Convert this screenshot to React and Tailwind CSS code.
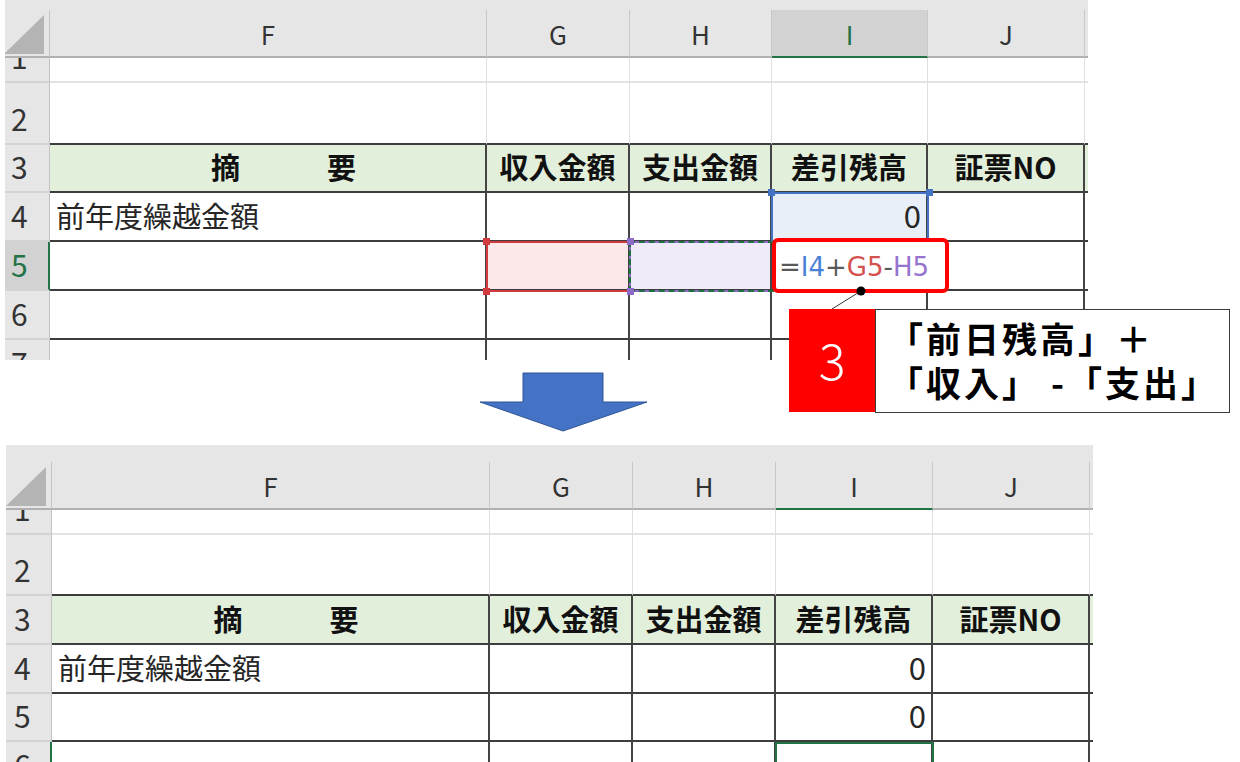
import React from "react";

const jp = "font-['Noto_Sans_CJK_JP','Noto_Sans',sans-serif]";

// column widths per sheet (the lower screenshot is scaled up a hair)
const topCols = [
  { label: "F", w: "w-[437px]" },
  { label: "G", w: "w-[143px]" },
  { label: "H", w: "w-[142px]" },
  { label: "I", w: "w-[156px]" },
  { label: "J", w: "w-[157px]" },
];
const bottomCols = [
  { label: "F", w: "w-[438px]" },
  { label: "G", w: "w-[143px]" },
  { label: "H", w: "w-[143px]" },
  { label: "I", w: "w-[157px]" },
  { label: "J", w: "w-[157px]" },
];

const headTexts = {
  0: { v: "摘　　　要", cls: "justify-center pl-[32px] font-bold text-[29px] text-[#111]" },
  1: { v: "収入金額", cls: "justify-center font-bold text-[29px] text-[#111]" },
  2: { v: "支出金額", cls: "justify-center font-bold text-[29px] text-[#111]" },
  3: { v: "差引残高", cls: "justify-center font-bold text-[29px] text-[#111]" },
  4: { v: "証票NO", cls: "justify-center font-bold text-[29px] text-[#111]" },
};
const carry = { v: "前年度繰越金額", cls: "justify-start pl-[6px] text-[29px] text-[#262626]" };
const zero = { v: "0", cls: "justify-end pr-[5px] text-[31px] text-[#262626]" };

const topRows = [
  { n: 1, h: "h-[25px]", type: "plain" },
  { n: 2, h: "h-[62px]", type: "plain", darkBottom: true },
  { n: 3, h: "h-[48px]", type: "head", cells: headTexts },
  { n: 4, h: "h-[49px]", type: "body", cells: { 0: carry, 3: { ...zero, bg: "bg-[#e9eff9]" } } },
  { n: 5, h: "h-[49px]", type: "body", active: true, cells: { 1: { bg: "bg-[#fbe9ea]" }, 2: { bg: "bg-[#efebf8]" } } },
  { n: 6, h: "h-[49px]", type: "body" },
  { n: 7, h: "h-[49px]", type: "body" },
];

const bottomRows = [
  { n: 1, h: "h-[25px]", type: "plain" },
  { n: 2, h: "h-[61px]", type: "plain", darkBottom: true },
  { n: 3, h: "h-[49px]", type: "head", cells: headTexts },
  { n: 4, h: "h-[49px]", type: "body", cells: { 0: carry, 3: zero } },
  { n: 5, h: "h-[48px]", type: "body", cells: { 3: zero } },
  { n: 6, h: "h-[49px]", type: "body", lineOnly: true },
];

function Corner() {
  return (
    <svg className="absolute right-[5px] bottom-[2px]" width="40" height="39" viewBox="0 0 40 39">
      <polygon points="0,39 40,39 40,0" fill="#b4b4b4" />
    </svg>
  );
}

function Sheet({ ml, height, band, hdrW, numPl, cols, rows, activeCol, activeColFill }) {
  return (
    <div className={`${ml} ${height} w-fit overflow-hidden ${jp}`}>
      {/* column headers */}
      <div className="bg-[#e6e6e6]">
        <div className={band} />
        <div className="flex h-[48px]">
          <div className={`${hdrW} relative border-r border-r-[#c4c4c4] border-b-2 border-b-[#b0b0b0]`}>
            <Corner />
          </div>
          {cols.map((c, i) => (
            <div
              key={c.label}
              className={`${c.w} flex items-center justify-center text-[26px] border-r border-r-[#c8c8c8] border-b-2 ${
                i === activeCol
                  ? `border-b-[#217346] ${activeColFill ? "bg-[#d2d2d2] text-[#217346]" : "text-[#333]"}`
                  : "border-b-[#b0b0b0] text-[#333]"
              }`}
            >
              {c.label}
            </div>
          ))}
          <div className="w-[3px] border-b-2 border-b-[#b0b0b0]" />
        </div>
      </div>

      {/* rows */}
      {rows.map((r) => {
        const plain = r.type === "plain";
        const bottom = plain
          ? r.darkBottom
            ? "border-b-2 border-b-[#3d3d3d]"
            : "border-b-2 border-b-[#e2e2e2]"
          : "border-b-2 border-b-[#3d3d3d]";
        const right = plain ? "border-r border-r-[#e0e0e0]" : "border-r-2 border-r-[#444]";
        return (
          <div key={r.n} className={`flex ${r.h}`}>
            <div
              className={`${hdrW} ${numPl} flex items-end overflow-hidden border-b-2 border-b-[#d3d3d3] ${
                r.active
                  ? "bg-[#d2d2d2] text-[#217346] border-r-2 border-r-[#217346]"
                  : r.lineOnly
                  ? "bg-[#e6e6e6] text-[#333] border-r-2 border-r-[#217346]"
                  : "bg-[#e6e6e6] text-[#333] border-r border-r-[#c2c2c2]"
              }`}
            >
              <span className="text-[30px] leading-[30px] mb-[10px]">{r.n}</span>
            </div>
            {cols.map((c, i) => {
              const cell = r.cells && r.cells[i];
              const bg = cell && cell.bg ? cell.bg : r.type === "head" ? "bg-[#e2efda]" : "bg-white";
              return (
                <div key={c.label} className={`${c.w} flex items-end overflow-hidden ${bg} ${right} ${bottom} ${cell && cell.cls ? cell.cls : ""}`}>
                  {cell && cell.v && <span className="leading-[30px] mb-[10px] whitespace-nowrap">{cell.v}</span>}
                </div>
              );
            })}
            <div className={`w-[3px] ${bottom} ${r.type === "head" ? "bg-[#e2efda]" : "bg-white"}`} />
          </div>
        );
      })}
    </div>
  );
}

function Handle({ className }) {
  return <div className={`absolute w-[7px] h-[7px] ${className}`} />;
}

export default function App() {
  return (
    <div className="relative w-[1240px] h-[762px] bg-white overflow-hidden">
      <Sheet
        ml="ml-[5px]"
        height="h-[360px]"
        band="h-[10px]"
        hdrW="w-[45px]"
        numPl="pl-[6px]"
        cols={topCols}
        rows={topRows}
        activeCol={3}
        activeColFill
      />

      {/* down arrow */}
      <div className="h-[85px] pt-[12px]">
        <svg className="ml-[479px]" width="170" height="61" viewBox="0 0 170 61">
          <polygon
            points="44,1 124,1 124,30 168,30 84,59 1,30 44,30"
            fill="#4472c4"
            stroke="#2f5597"
            strokeWidth="1"
          />
        </svg>
      </div>

      <Sheet
        ml="ml-[6px]"
        height="h-[317px]"
        band="h-[17px]"
        hdrW="w-[46px]"
        numPl="pl-[8px]"
        cols={bottomCols}
        rows={bottomRows}
        activeCol={3}
      />

      {/* top sheet: reference highlights */}
      <div className="absolute left-[771px] top-[192px] w-[158px] h-[51px] border-2 border-[#4472c4]" />
      <Handle className="left-[768px] top-[189px] bg-[#4472c4]" />
      <Handle className="left-[926px] top-[189px] bg-[#4472c4]" />

      <div className="absolute left-[486px] top-[241px] w-[145px] h-[51px] border-2 border-[#d13b40]" />
      <Handle className="left-[483px] top-[238px] bg-[#d13b40]" />
      <Handle className="left-[483px] top-[288px] bg-[#d13b40]" />

      <div className="absolute left-[629px] top-[241px] w-[145px] h-[51px] border-2 border-[#8e6bc9]">
        <div className="absolute -inset-[2px] border-2 border-dashed border-[#1e7145]" />
      </div>
      <Handle className="left-[627px] top-[238px] bg-[#8e6bc9]" />
      <Handle className="left-[627px] top-[288px] bg-[#8e6bc9]" />

      {/* formula being typed */}
      <div className="absolute left-[772px] top-[238px] w-[177px] h-[55px] border-4 border-[#ff0000] rounded-[6px] bg-white flex items-center pl-[3px] pt-[2px] font-['DejaVu_Sans',sans-serif] text-[26px] leading-none">
        <span className="text-[#595959]">=</span>
        <span className="text-[#4a80d6]">I4</span>
        <span className="text-[#595959]">+</span>
        <span className="text-[#d3524f]">G5</span>
        <span className="text-[#595959]">-</span>
        <span className="text-[#9673cf]">H5</span>
      </div>

      {/* leader line */}
      <svg className="absolute left-[825px] top-[285px]" width="45" height="30" viewBox="0 0 45 30">
        <line x1="36" y1="6" x2="7" y2="24" stroke="#333" strokeWidth="1" />
        <circle cx="36" cy="6" r="4.5" fill="#000" />
      </svg>

      {/* callout */}
      <div className={`absolute left-[789px] top-[309px] flex ${jp}`}>
        <div className="w-[86px] h-[103px] bg-[#ff0000] flex items-center justify-center pb-[6px] text-white text-[50px] font-light leading-none">
          3
        </div>
        <div className="w-[355px] h-[104px] bg-white border border-[#3a3a3a] flex flex-col justify-center pl-[12px] pb-[3px] font-bold text-[35px] leading-[44px] tracking-[3px] text-black whitespace-nowrap">
          <div>「前日残高」＋</div>
          <div>「収入」 -「支出」</div>
        </div>
      </div>

      {/* bottom sheet: active cell I6 */}
      <div className="absolute left-[775px] top-[742px] w-[159px] h-[45px] border-2 border-[#217346]" />
    </div>
  );
}
